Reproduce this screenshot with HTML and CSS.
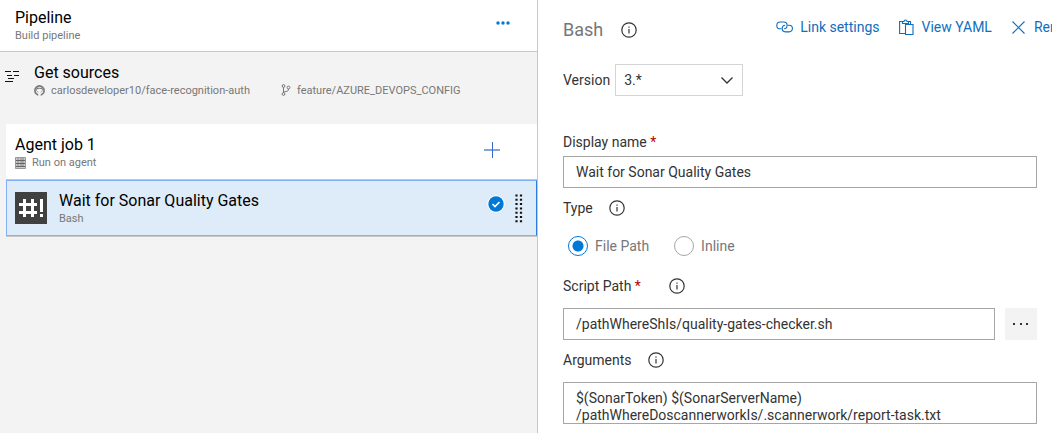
FILE: index.html
```html
<!DOCTYPE html>
<html lang="en">
<head>
<meta charset="utf-8">
<title>Build pipeline</title>
<link rel="stylesheet" href="styles.css">
</head>
<body>
<svg class="defs" aria-hidden="true">
  <symbol id="info" viewBox="0 0 16 16"><circle cx="8" cy="8" r="7.2" fill="none" stroke="currentColor" stroke-width="1.2"/><path d="M8 7v4.5M8 4.5v1.2" stroke="currentColor" stroke-width="1.2"/></symbol>
</svg>
<div class="layout">
  <section class="pipeline">
    <header class="row pipeline-head">
      <div class="row-text">
        <h1 class="row-title">Pipeline</h1>
        <p class="row-sub">Build pipeline</p>
      </div>
      <button class="icon-button more" type="button" aria-label="More actions">
        <svg width="14" height="4" viewBox="0 0 14 4" fill="#0078d7"><circle cx="2" cy="2" r="1.7"/><circle cx="7" cy="2" r="1.7"/><circle cx="12" cy="2" r="1.7"/></svg>
      </button>
    </header>
    <div class="row sources">
      <svg class="sources-icon" width="15" height="12" viewBox="0 0 15 12" stroke="#111" stroke-width="1"><path d="M0 .500h6M8 .500h6M2 4.500h5M9 4.500h5M3 7.500h6M0 10.500h8"/></svg>
      <div class="row-text">
        <h2 class="row-title">Get sources</h2>
        <div class="source-meta">
          <span class="row-sub repo"><svg width="11" height="11" viewBox="0 0 16 16"><circle cx="8" cy="8" r="6.700" fill="none" stroke="#777" stroke-width="2.400"/><path fill="#777" d="M3.700 3l2 1h4.600l2-1 .5 4-1.300 3-2.500 1H7L4.500 10 3.200 7z"/><path fill="#f3f3f3" d="M4.500 6.200C5.500 5 10.500 5 11.500 6.200c.6 3-1 4-2.300 4.200.5.600.6 1.600.6 5.600H6.200c0-4 .1-5 .6-5.600-1.300-.200-2.900-1.200-2.300-4.200z"/></svg>carlosdeveloper10/face-recognition-auth</span>
          <span class="row-sub branch"><svg width="10" height="12" viewBox="0 0 10 12" fill="none" stroke="#777" stroke-width="1"><circle cx="2.500" cy="2" r="1.400"/><circle cx="7.500" cy="3.500" r="1.400"/><circle cx="2.500" cy="10" r="1.400"/><path d="M2.500 3.400v5.200M7.500 5c0 2-1 2.200-2.500 2.500S2.500 8 2.500 8.600"/></svg>feature/AZURE_DEVOPS_CONFIG</span>
        </div>
      </div>
    </div>
    <div class="jobs">
      <div class="row job">
        <div class="row-text">
          <h2 class="row-title">Agent job 1</h2>
          <p class="row-sub agent"><svg width="11" height="12" viewBox="0 0 11 12"><path d="M.5.500h10v11H.500z" fill="#ccc" stroke="#999"/><path d="M1 3.500h9M1 6.500h9M1 9.500h9" stroke="#666"/><path d="M2 2h2M5 2h4M2 5h2M5 5h4M2 8h2M5 8h4" stroke="#888"/></svg>Run on agent</p>
        </div>
        <button class="icon-button add" type="button" aria-label="Add a task">
          <svg width="16" height="16" viewBox="0 0 16 16"><path d="M0 8h16" stroke="#7fa9dc" stroke-width="2"/><path d="M8.500 0v16" stroke="#3865c9"/></svg>
        </button>
      </div>
      <div class="row task">
        <svg class="task-icon" width="32" height="32" viewBox="0 0 32 32"><path fill="#404040" d="M0 0h32v32H0z"/><path d="M9.500 7v18M17.500 7v18M4 12.500h18M4 20.500h18M26.500 7v13M26.500 22v3" fill="none" stroke="#fff" stroke-width="3"/></svg>
        <div class="row-text">
          <h2 class="row-title">Wait for Sonar Quality Gates</h2>
          <p class="row-sub">Bash</p>
        </div>
        <svg class="check" width="18" height="18" viewBox="0 0 18 18"><circle cx="9" cy="9" r="8.700" fill="#fff"/><circle cx="9" cy="9" r="7.700" fill="#0078d7"/><path d="M5.500 9L8 11.500 12.500 7" fill="none" stroke="#fff" stroke-width="1.600"/></svg>
        <svg class="grip" width="8" height="29" viewBox="0 0 8 29"><path d="M1.500.500v28M6 .500v28" stroke="#111" stroke-width="2.200" stroke-dasharray="2 2.300"/></svg>
      </div>
    </div>
  </section>

  <section class="details">
    <header class="details-head">
      <h2 class="details-title">Bash</h2>
      <svg class="info" role="img" aria-label="Information"><use href="#info"/></svg>
      <div class="toolbar">
        <button class="command" type="button"><svg width="17" height="12" viewBox="0 0 17 12" fill="none" stroke="currentColor" stroke-width="1.100"><path d="M5.500 7.800H4.200a3.400 3.400 0 0 1 0-6.800h3.600a3.400 3.400 0 0 1 3.300 3.400c0 2-1.300 3.300-3 3.400"/><path d="M11.500 4.200h1.600a3.300 3.300 0 0 1 0 6.700H9.500a3.300 3.300 0 0 1-3.300-3.300c0-2 1.300-3.300 3-3.400"/></svg>Link settings</button>
        <button class="command yaml" type="button"><svg width="15" height="16" viewBox="0 0 15 16" fill="none" stroke="currentColor" stroke-width="1.100"><path d="M6 14.500H.600V2.500H4M9 2.500h2.500v3M3.500 4.500v-2H5a1.500 1.500 0 0 1 3 0h1.500v2zM6.500 5.500h7.500v10H6.500z"/></svg>View YAML</button>
        <button class="command remove" type="button"><svg width="13" height="13" viewBox="0 0 13 13" stroke="currentColor" stroke-width="1.100"><path d="M.5.500l12 12M12.500.500l-12 12"/></svg>Remove</button>
      </div>
    </header>
    <form class="form">
      <div class="version">
        <label for="version">Version</label>
        <select id="version"><option>3.*</option></select>
        <svg class="chevron" width="12" height="7" viewBox="0 0 12 7" fill="none" stroke="#333" stroke-width="1.300" aria-hidden="true"><path d="M.5.500L6 6l5.500-5.500"/></svg>
      </div>
      <div class="field display-name">
        <div class="field-label"><label for="name">Display name <span class="required">*</span></label></div>
        <input class="text-box" id="name" type="text" value="Wait for Sonar Quality Gates">
      </div>
      <fieldset class="type" aria-labelledby="type-label">
        <div class="field-label"><span id="type-label">Type</span><svg class="info" role="img" aria-label="Information"><use href="#info"/></svg></div>
        <div class="radios">
          <label class="radio"><input type="radio" name="type" checked>File Path</label>
          <label class="radio"><input type="radio" name="type">Inline</label>
        </div>
      </fieldset>
      <div class="field script">
        <div class="field-label script-label"><label for="path">Script Path <span class="required">*</span></label><svg class="info" role="img" aria-label="Information"><use href="#info"/></svg></div>
        <div class="path-row">
          <input class="text-box" id="path" type="text" value="/pathWhereShIs/quality-gates-checker.sh">
          <button class="browse" type="button" aria-label="Browse"><svg width="16" height="2" viewBox="0 0 16 2" fill="#333"><path d="M0 0h2v2H0zM7 0h2v2H7zM13 0h2v2h-2z"/></svg></button>
        </div>
      </div>
      <div class="field arguments">
        <div class="field-label"><label for="args">Arguments</label><svg class="info" role="img" aria-label="Information"><use href="#info"/></svg></div>
        <textarea class="text-box" id="args" rows="2">$(SonarToken) $(SonarServerName)
/pathWhereDoscannerworkIs/.scannerwork/report-task.txt</textarea>
      </div>
    </form>
  </section>
</div>
</body>
</html>
```
FILE: styles.css
```css
* { box-sizing: border-box; }

body {
  margin: 0;
  overflow: hidden;
  background: #fff;
  color: #333;
  font: 14px/20px Roboto, "Liberation Sans", sans-serif;
}

h1, h2, p { margin: 0; font-weight: 400; }
svg { flex: none; }
button, input, select, textarea { font: inherit; color: inherit; }
button { padding: 0; border: 0; background: none; cursor: pointer; }

.defs { display: none; }

.layout {
  display: grid;
  grid-template-columns: minmax(0, 538fr) minmax(0, 514fr);
  min-height: 100vh;
}

/* Pipeline tree */
.pipeline { background: #f3f3f3; border-right: 1px solid #c8c8c8; }
.row { display: flex; align-items: center; }
.row-text { flex: 1; min-width: 0; }
.row-title { font-size: 16px; line-height: 20px; color: #000; }
.row-sub {
  display: flex;
  align-items: center;
  font-size: 11px;
  line-height: 15px;
  color: #777;
  white-space: nowrap;
}
.icon-button { display: flex; align-items: center; justify-content: center; }

.pipeline-head {
  height: 52px;
  padding: 0 27px 0 15px;
  background: #fff;
  border-bottom: 1px solid #c8c8c8;
}
.more { padding-bottom: 6px; }
.sources { gap: 14px; height: 72px; padding: 0 15px 14px 5px; }
.sources-icon { margin-bottom: 8px; }
.sources .row-text { padding-bottom: 2px; }
.source-meta { display: flex; gap: 31px; }
.repo, .branch, .agent { gap: 6px; }

.jobs { padding-left: 6px; }
.job {
  height: 56px;
  padding: 0 37px 0 9px;
  background: #fff;
  border-bottom: 1px solid #c8c8c8;
}
.job .row-text { padding-top: 2px; }
.add { padding-bottom: 4px; }
.task {
  height: 56px;
  padding: 0 13px 0 8px;
  background: #deebf9;
  border: 1px solid #82b1f5;
  border-right-color: #2b7de0;
  box-shadow: 0 1px #c8c8c8;
}
.task-icon { margin-right: 12px; }
.check { margin: 0 10px 8px 0; }

/* Task details */
.details { min-width: 0; padding-left: 25px; overflow: hidden; }
.details-head { display: flex; align-items: center; height: 60px; }
.details-title { font-size: 18px; color: #777; }
.info { width: 16px; height: 16px; color: #333; }
.details-head .info { margin-left: 18px; }
.toolbar { display: flex; margin: 0 0 6px 139px; }
.command {
  display: flex;
  flex: none;
  align-items: center;
  gap: 7px;
  color: #106ebe;
  white-space: nowrap;
}
.yaml { gap: 8px; margin-left: 19px; }
.remove { gap: 9px; margin-left: 20px; }

.form { padding: 4px 15px 0 0; }
.version { position: relative; display: flex; align-items: center; gap: 5px; width: 180px; }
.version select {
  flex: 1;
  height: 32px;
  padding: 0 8px;
  appearance: none;
  background: #fff;
  border: 1px solid #d4d4d4;
  border-radius: 0;
}
.chevron { position: absolute; right: 10px; pointer-events: none; }

.field-label { display: flex; align-items: center; gap: 16px; }
.script-label { gap: 28px; }
.required { color: #b00; }
.text-box {
  display: block;
  width: 100%;
  height: 32px;
  padding: 0 12px;
  background: #fff;
  border: 1px solid #a6a6a6;
  border-radius: 0;
}
.display-name { margin-top: 36px; }
.display-name .text-box { margin-top: 4px; }

.type { margin: 10px 0 0; padding: 0; border: 0; }
.radios { display: flex; gap: 25px; padding: 18px 5px 20px; color: #777; }
.radio { display: flex; align-items: center; gap: 7px; }
.radio input {
  width: 20px;
  height: 20px;
  margin: 0;
  appearance: none;
  border: 1px solid #a6a6a6;
  border-radius: 50%;
}
.radio input:checked {
  border-color: #0078d7;
  background: radial-gradient(circle, #0078d7 5px, #fff 6px);
}

.path-row { display: flex; gap: 10px; margin-top: 12px; }
.path-row .text-box { flex: 1; min-width: 0; }
.browse {
  display: flex;
  flex: none;
  align-items: center;
  justify-content: center;
  width: 32px;
  background: #f3f3f3;
}
.arguments { margin-top: 10px; }
textarea.text-box {
  height: 42px;
  margin-top: 12px;
  padding: 7px 12px 0;
  line-height: 17px;
  overflow: hidden;
  resize: none;
}
```
